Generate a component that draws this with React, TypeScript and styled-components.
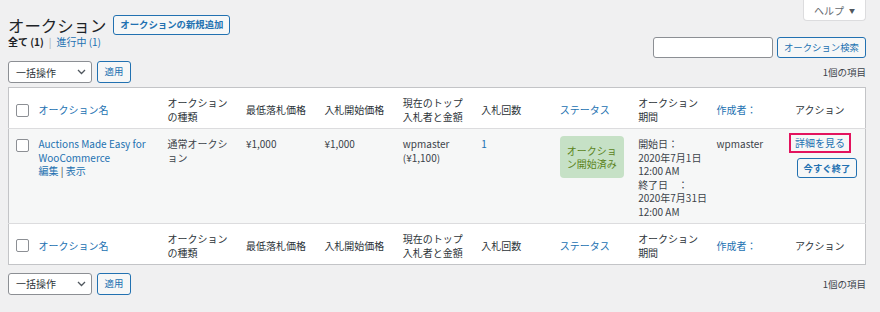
import styled, { createGlobalStyle } from 'styled-components'

const GlobalStyle = createGlobalStyle`
  body {
    margin: 0;
    background: #f0f0f1;
    color: #3c434a;
    font-family: "Noto Sans CJK JP", "Noto Sans", sans-serif;
    font-size: 10px;
  }
`

const columns = [
  { label: 'オークション名', sortable: true },
  { label: 'オークションの種類' },
  { label: '最低落札価格' },
  { label: '入札開始価格' },
  { label: '現在のトップ入札者と金額' },
  { label: '入札回数' },
  { label: 'ステータス', sortable: true },
  { label: 'オークション期間' },
  { label: '作成者：', sortable: true },
  { label: 'アクション' },
]

const period = ['開始日：', '2020年7月1日', '12:00 AM', '終了日　：', '2020年7月31日', '12:00 AM']

function App() {
  return (
    <Wrap>
      <GlobalStyle />
      <TopBar>
        <TitleRow>
          <Title>オークション</Title>
          <ActionButton $bold>オークションの新規追加</ActionButton>
        </TitleRow>
        <HelpTab>
          ヘルプ <Caret>▼</Caret>
        </HelpTab>
      </TopBar>

      <SubRow>
        <Filters>
          <Current>全て</Current> <Count $dark>(1)</Count>
          <Sep>|</Sep>
          <FilterLink>進行中 (1)</FilterLink>
        </Filters>
        <SearchBox>
          <SearchInput type="text" />
          <ActionButton $h={21}>オークション検索</ActionButton>
        </SearchBox>
      </SubRow>

      <TableNav />

      <Table>
        <colgroup>
          <col style={{ width: 22 }} />
          <col style={{ width: 129 }} />
          {columns.slice(1).map((c) => (
            <col key={c.label} />
          ))}
        </colgroup>
        <thead>
          <HeaderRow columns={columns} />
        </thead>
        <tbody>
          <DataRow>
            <CheckCell>
              <Check $top={2} />
            </CheckCell>
            <Cell>
              <TitleLink>Auctions Made Easy for WooCommerce</TitleLink>
              <RowActions>
                <RowLink>編集</RowLink> | <RowLink>表示</RowLink>
              </RowActions>
            </Cell>
            <Cell>通常オークション</Cell>
            <Cell>¥1,000</Cell>
            <Cell>¥1,000</Cell>
            <Cell>
              wpmaster
              <br />
              (¥1,100)
            </Cell>
            <Cell>
              <RowLink>1</RowLink>
            </Cell>
            <Cell>
              <StatusBadge>オークション開始済み</StatusBadge>
            </Cell>
            <Cell>
              {period.map((line, i) => (
                <Line key={i}>{line}</Line>
              ))}
            </Cell>
            <Cell>wpmaster</Cell>
            <Cell>
              <ActionStack>
                <DetailLink>詳細を見る</DetailLink>
                <EndButton>今すぐ終了</EndButton>
              </ActionStack>
            </Cell>
          </DataRow>
        </tbody>
        <tfoot>
          <HeaderRow columns={columns} footer />
        </tfoot>
      </Table>

      <TableNav bottom />
    </Wrap>
  )
}

const HeaderRow = ({
  columns,
  footer,
}: {
  columns: { label: string; sortable?: boolean }[]
  footer?: boolean
}) => (
  <tr>
    <HeadCheck $footer={footer}>
      <Check />
    </HeadCheck>
    {columns.map((c) => (
      <HeadCell key={c.label} $footer={footer} $sortable={c.sortable}>
        {c.label}
      </HeadCell>
    ))}
  </tr>
)

const TableNav = ({ bottom }: { bottom?: boolean }) => (
  <Nav $bottom={bottom}>
    <BulkGroup>
      <BulkSelect>
        一括操作
        <svg width="9" height="6" viewBox="0 0 9 6">
          <path d="M1 1 L4.5 4.5 L8 1" fill="none" stroke="#50575e" strokeWidth="1.3" />
        </svg>
      </BulkSelect>
      <ActionButton $h={22} $w={34}>
        適用
      </ActionButton>
    </BulkGroup>
    <ItemCount>1個の項目</ItemCount>
  </Nav>
)

const Wrap = styled.div`
  padding: 0 14px 0 8px;
`

const TopBar = styled.div`
  display: flex;
  justify-content: space-between;
  align-items: flex-start;
`

const TitleRow = styled.div`
  display: flex;
  align-items: center;
  gap: 7px;
  height: 22px;
  padding-top: 14px;
`

const Title = styled.h1`
  margin: 0;
  font-size: 16.4px;
  font-weight: 400;
  color: #1d2327;
  line-height: 20px;
`

const ActionButton = styled.button<{ $bold?: boolean; $h?: number; $w?: number }>`
  height: ${(p) => p.$h ?? 20}px;
  ${(p) => (p.$w ? `width: ${p.$w}px;` : '')}
  padding: 0 6px;
  border: 1px solid #2271b1;
  border-radius: 3px;
  background: #f6f7f7;
  color: #2271b1;
  font-family: inherit;
  font-size: 9.4px;
  font-weight: ${(p) => (p.$bold ? 600 : 400)};
  line-height: 1;
  white-space: nowrap;
`

const HelpTab = styled.div`
  width: 63px;
  height: 21px;
  box-sizing: border-box;
  display: flex;
  align-items: center;
  justify-content: center;
  gap: 5px;
  background: #fff;
  border: 1px solid #dcdcde;
  border-top: none;
  border-radius: 0 0 4px 4px;
  color: #646970;
  font-size: 10px;
`

const Caret = styled.span`
  font-size: 6px;
  color: #50575e;
`

const SubRow = styled.div`
  display: flex;
  justify-content: space-between;
  align-items: flex-start;
`

const Filters = styled.div`
  line-height: 12px;
  font-size: 10px;
  color: #50575e;
`

const Current = styled.span`
  color: #1d2327;
  font-weight: 700;
`

const Count = styled.span<{ $dark?: boolean }>`
  color: ${(p) => (p.$dark ? '#1d2327' : '#50575e')};
  font-weight: 600;
`

const Sep = styled.span`
  color: #a7aaad;
  margin: 0 5px;
`

const FilterLink = styled.span`
  color: #2271b1;
`

const SearchBox = styled.div`
  display: flex;
  gap: 4px;
  margin-top: 1px;
`

const SearchInput = styled.input`
  width: 120px;
  height: 21px;
  box-sizing: border-box;
  border: 1px solid #8c8f94;
  border-radius: 3px;
  background: #fff;
  margin: 0;
`

const Nav = styled.div<{ $bottom?: boolean }>`
  display: flex;
  justify-content: space-between;
  align-items: center;
  height: 22px;
  margin-top: ${(p) => (p.$bottom ? 8 : 3)}px;
`

const BulkGroup = styled.div`
  display: flex;
  gap: 5px;
`

const BulkSelect = styled.div`
  width: 84px;
  height: 22px;
  box-sizing: border-box;
  display: flex;
  align-items: center;
  justify-content: space-between;
  padding: 0 5px 0 7px;
  border: 1px solid #8c8f94;
  border-radius: 3px;
  background: #fff;
  color: #2c3338;
  font-size: 10px;
`

const ItemCount = styled.span`
  font-size: 9.5px;
  color: #3c434a;
`

const Table = styled.table`
  width: 100%;
  margin-top: 4px;
  border-collapse: collapse;
  table-layout: fixed;
  border: 1px solid #c3c4c7;
  background: #fff;
`

const HeadCheck = styled.th<{ $footer?: boolean }>`
  padding: 8px 0 4px 7px;
  vertical-align: middle;
  text-align: left;
  ${(p) => (p.$footer ? 'border-top: 1px solid #dcdcde;' : 'border-bottom: 1px solid #dcdcde;')}
`

const HeadCell = styled.th<{ $footer?: boolean; $sortable?: boolean }>`
  padding: 8px 8px 4px;
  height: 27px;
  vertical-align: middle;
  text-align: left;
  font-weight: 400;
  font-size: 10px;
  line-height: 14px;
  color: ${(p) => (p.$sortable ? '#2271b1' : '#2c3338')};
  ${(p) => (p.$footer ? 'border-top: 1px solid #dcdcde;' : 'border-bottom: 1px solid #dcdcde;')}
`

const DataRow = styled.tr`
  background: #f6f7f7;
`

const CheckCell = styled.td`
  padding: 8px 0 4px 7px;
  vertical-align: top;
`

const Check = styled.span<{ $top?: number }>`
  display: block;
  width: 11px;
  height: 11px;
  margin-top: ${(p) => p.$top ?? 0}px;
  border: 1px solid #8c8f94;
  border-radius: 2px;
  background: #fff;
`

const Cell = styled.td`
  padding: 8px 8px 4px;
  vertical-align: top;
  font-size: 10px;
  line-height: 13.6px;
  color: #3c434a;
`

const Line = styled.div`
  white-space: nowrap;
`

const TitleLink = styled.div`
  color: #2271b1;
`

const RowActions = styled.div`
  color: #3c434a;
`

const RowLink = styled.span`
  color: #2271b1;
`

const StatusBadge = styled.div`
  width: 64px;
  box-sizing: border-box;
  margin-top: -1px;
  padding: 8px 7px;
  border-radius: 4px;
  background: #c6e1c6;
  color: #5b841b;
  text-align: center;
  line-height: 13px;
`

const ActionStack = styled.div`
  display: flex;
  flex-direction: column;
  align-items: flex-start;
`

const DetailLink = styled.span`
  margin: -4px 0 0 -6px;
  padding: 1px 4px;
  border: 2px solid #e3135e;
  color: #2271b1;
  line-height: 14px;
  white-space: nowrap;
`

const EndButton = styled.button`
  align-self: flex-end;
  margin-top: 5px;
  width: 60px;
  height: 20px;
  padding: 0;
  border: 1px solid #2271b1;
  border-radius: 3px;
  background: #f6f7f7;
  color: #2271b1;
  font-family: inherit;
  font-size: 9.4px;
  font-weight: 600;
  white-space: nowrap;
`

export default App
